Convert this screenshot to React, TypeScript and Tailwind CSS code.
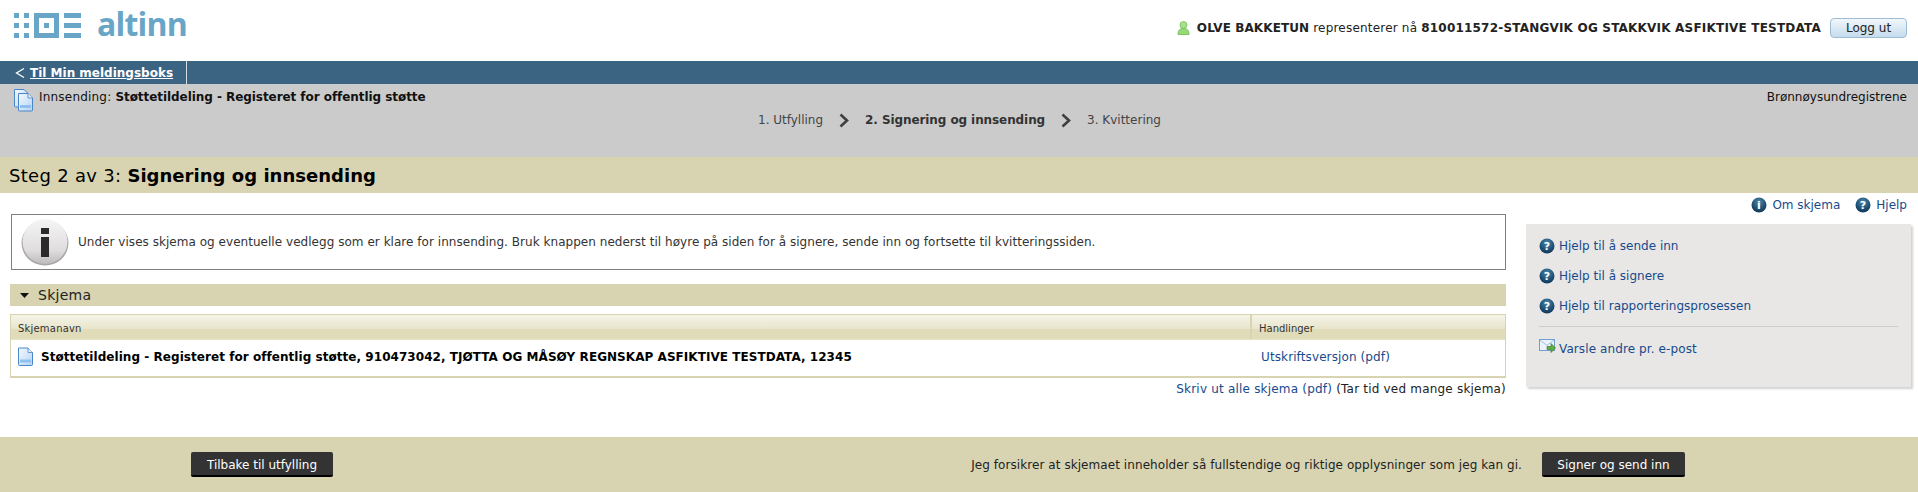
import React from "react";

const LOGO = "#69a5c6";

function AltinnMark() {
  return (
    <svg width="68" height="26" viewBox="0 0 68 26" className="block">
      <g fill={LOGO}>
        <rect x="0" y="0" width="5" height="5" />
        <rect x="10" y="0" width="5" height="5" />
        <rect x="0" y="10" width="5" height="5" />
        <rect x="10" y="10" width="5" height="5" />
        <rect x="0" y="20" width="5" height="5" />
        <rect x="10" y="20" width="5" height="5" />
        <path d="M20 0h25v25H20zM25 5v15h15V5z" fillRule="evenodd" />
        <rect x="30" y="10" width="5" height="5" />
        <rect x="50" y="0" width="17" height="5" />
        <rect x="50" y="10" width="17" height="5" />
        <rect x="50" y="20" width="17" height="5" />
      </g>
    </svg>
  );
}

function DocIcon({ id, stacked }: { id: string; stacked?: boolean }) {
  const sheet = "M1.5 1h9.5l4.5 4.5V17.5a1 1 0 0 1-1 1H2.5a1 1 0 0 1-1-1z";
  return (
    <svg width={stacked ? 22 : 17} height={stacked ? 25 : 20} viewBox={stacked ? "-5 -4.5 22 25" : "0 0 17 20"} className="block">
      <defs>
        <linearGradient id={id} x1="0" y1="0" x2="1" y2="1">
          <stop offset="0" stopColor="#f4f9fe" />
          <stop offset="1" stopColor="#b5d4f4" />
        </linearGradient>
      </defs>
      {stacked && <path d={sheet} transform="translate(-4 -4)" fill={`url(#${id})`} stroke="#4a86c8" strokeWidth="1" />}
      <path d={sheet} fill={`url(#${id})`} stroke="#4a86c8" strokeWidth="1" />
      <path d="M11 1v4.5h4.5" fill="#e4effb" stroke="#4a86c8" strokeWidth="0.8" />
      <rect x="3" y="12.5" width="11" height="3" fill="#8fc0ee" />
    </svg>
  );
}

function HelpDot({ id, glyph }: { id: string; glyph: "?" | "i" }) {
  return (
    <svg width="16" height="16" viewBox="0 0 16 16" className="block shrink-0">
      <defs>
        <radialGradient id={id} cx="0.5" cy="0.3" r="0.75">
          <stop offset="0" stopColor="#4d86ab" />
          <stop offset="0.65" stopColor="#1c4d72" />
          <stop offset="1" stopColor="#0d3454" />
        </radialGradient>
      </defs>
      <circle cx="8" cy="8" r="7.5" fill={`url(#${id})`} />
      <text
        x="8"
        y="12"
        textAnchor="middle"
        fill="#ffffff"
        fontSize="11"
        fontWeight="700"
        fontFamily="'DejaVu Sans', sans-serif"
      >
        {glyph}
      </text>
    </svg>
  );
}

function BigInfo() {
  return (
    <svg width="48" height="48" viewBox="0 0 48 48" className="block shrink-0">
      <defs>
        <linearGradient id="bigInfo" x1="0" y1="0" x2="0" y2="1">
          <stop offset="0" stopColor="#f6f5f5" />
          <stop offset="0.7" stopColor="#dfdddd" />
          <stop offset="1" stopColor="#bdbbbb" />
        </linearGradient>
      </defs>
      <ellipse cx="24" cy="25" rx="23.5" ry="22.5" fill="#a9a7a6" />
      <circle cx="24" cy="23.5" r="22.5" fill="url(#bigInfo)" />
      <rect x="20" y="10" width="8" height="6" fill="#2b2b2b" />
      <rect x="20" y="19" width="8" height="20" fill="#2b2b2b" />
    </svg>
  );
}

function Chevron() {
  return (
    <svg width="10" height="15" viewBox="0 0 10 15" className="block">
      <path d="M1.5 1.5L8 7.5L1.5 13.5" fill="none" stroke="#3f3f3f" strokeWidth="2.6" />
    </svg>
  );
}

function PersonIcon() {
  return (
    <svg width="13" height="14" viewBox="0 0 13 14" className="block">
      <circle cx="6.5" cy="4" r="3.5" fill="#a5e08a" stroke="#76c05a" strokeWidth="0.8" />
      <path d="M1 13.5c0-4 1.5-6 5.500-6s5.500 2 5.500 6z" fill="#96d97a" stroke="#6cba50" strokeWidth="0.8" />
    </svg>
  );
}

function MailIcon() {
  return (
    <svg width="17" height="16" viewBox="0 0 17 16" className="block shrink-0">
      <rect x="0.500" y="0.500" width="15" height="11" fill="#eaf3fc" stroke="#6f9fd0" />
      <path d="M1 1l7 5.500L15 1" fill="none" stroke="#9dbfe2" />
      <path d="M8 7.500h4V4.500l4.500 4.500-4.500 4.500v-3H8z" fill="#62ab45" stroke="#3f7f2c" strokeWidth="0.7" />
    </svg>
  );
}

function Tlink({ children }: { children: React.ReactNode }) {
  return <span className="text-[#174a8c]">{children}</span>;
}

function SideLink({ id, label }: { id: string; label: string }) {
  return (
    <div className="flex h-[30px] items-center gap-[4px]">
      <HelpDot id={id} glyph="?" />
      <Tlink>{label}</Tlink>
    </div>
  );
}

function DarkButton({ label, width }: { label: string; width: string }) {
  return (
    <button className={`h-[25px] ${width} rounded-[2px] border-b-2 border-black bg-[#333333] pt-[2px] text-[12px] text-white`}>
      {label}
    </button>
  );
}

export default function App() {
  return (
    <div className="h-[492px] w-[1918px] overflow-hidden bg-white font-['DejaVu_Sans',Verdana,sans-serif] text-[12px] text-black">
      <header className="flex h-[61px] items-start justify-between pl-[14px] pr-[11px]">
        <div className="flex items-center gap-[15px] pt-[11px]">
          <AltinnMark />
          <span className="-mt-[4px] font-['Open_Sans',sans-serif] text-[32px] font-bold leading-[34px] tracking-[-0.8px] text-[#69a5c6]">
            altinn
          </span>
        </div>
        <div className="flex items-center pt-[18px]">
          <PersonIcon />
          <span className="ml-[7px] tracking-[0.2px] text-[#222]">
            <b className="tracking-[0.1px]">OLVE BAKKETUN</b> representerer nå <b>810011572-STANGVIK OG STAKKVIK ASFIKTIVE TESTDATA</b>
          </span>
          <button className="ml-[9px] h-[20px] w-[77px] rounded-[4px] border border-[#9dbdd6] bg-gradient-to-b from-[#f2f7fb] to-[#c5dcee] text-[12px] text-[#222]">
            Logg ut
          </button>
        </div>
      </header>

      <nav className="flex h-[23px] bg-[#3b6482]">
        <div className="flex w-[187px] items-center border-r border-[#d5dde3] pl-[15px] text-[12px] font-bold text-white">
          <svg width="10" height="12" viewBox="0 0 10 12" className="mr-[5px] block">
            <path d="M9 1.500L1.500 6L9 10.500" fill="none" stroke="#ffffff" strokeWidth="1.300" />
          </svg>
          <span className="underline">Til Min meldingsboks</span>
        </div>
      </nav>

      <section className="h-[73px] bg-[#cbcbcb] pl-[12px] pr-[11px] pt-[4px]">
        <div className="flex items-start justify-between">
          <div className="flex items-start">
            <DocIcon id="docStack" stacked />
            <span className="ml-[5px] tracking-[0.2px] text-[#111]">
              Innsending: <b className="tracking-[-0.06px]">Støttetildeling - Registeret for offentlig støtte</b>
            </span>
          </div>
          <span className="text-[#111]">Brønnøysundregistrene</span>
        </div>
        <div className="-mt-[2px] ml-[746px] flex items-center text-[#444]">
          <span>1. Utfylling</span>
          <span className="mx-[16px]">
            <Chevron />
          </span>
          <b className="tracking-[-0.09px] text-[#333]">2. Signering og innsending</b>
          <span className="mx-[16px]">
            <Chevron />
          </span>
          <span>3. Kvittering</span>
        </div>
      </section>

      <div className="flex h-[36px] items-center bg-[#d8d4b2] pl-[9px] text-[18px] tracking-[0.3px]">
        <span>
          Steg 2 av 3: <b className="tracking-[0.03px]">Signering og innsending</b>
        </span>
      </div>

      <main className="relative flex h-[244px] pl-[10px]">
        <div className="w-[1496px] pt-[21px]">
          <div className="ml-[1px] flex h-[56px] w-[1495px] items-center border border-[#808080] pl-[9px] tracking-[0.035px] text-[#333]">
            <BigInfo />
            <span className="ml-[9px]">
              Under vises skjema og eventuelle vedlegg som er klare for innsending. Bruk knappen nederst til høyre på siden for å signere, sende inn og fortsette til kvitteringssiden.
            </span>
          </div>

          <div className="mt-[14px] flex h-[22px] items-center bg-[#d8d4b2] pl-[10px] text-[14px] tracking-[0.25px] text-[#222]">
            <svg width="9" height="5" viewBox="0 0 9 5" className="mr-[9px] block">
              <path d="M0 0h9L4.500 5z" fill="#111111" />
            </svg>
            Skjema
          </div>

          <div className="mt-[8px] border border-[#d8d4b2] border-b-2">
            <div className="flex h-[25px] border-b border-[#e6e3c6] bg-[linear-gradient(to_bottom,#f5f4e8_0%,#e8e5cb_58%,#e0dcb9_58%,#e0dcb9_100%)] text-[10px] text-[#333]">
              <div className="flex w-[1241px] items-center border-r-2 border-[#d8d4b2] pl-[7px] pt-[3px] tracking-[0.2px]">Skjemanavn</div>
              <div className="flex items-center pl-[7px] pt-[3px]">Handlinger</div>
            </div>
            <div className="flex h-[36px] items-center pb-[2px]">
              <div className="flex w-[1243px] items-center pl-[6px]">
                <DocIcon id="docRow" />
                <b className="ml-[7px] text-[12px] tracking-[0.05px]">
                  Støttetildeling - Registeret for offentlig støtte, 910473042, TJØTTA OG MÅSØY REGNSKAP ASFIKTIVE TESTDATA, 12345
                </b>
              </div>
              <div className="pl-[7px] tracking-[0.11px]">
                <Tlink>Utskriftsversjon (pdf)</Tlink>
              </div>
            </div>
          </div>

          <div className="mt-[2px] text-right tracking-[0.2px] text-[#222]">
            <Tlink>Skriv ut alle skjema (pdf)</Tlink> (Tar tid ved mange skjema)
          </div>
        </div>

        <aside className="ml-[20px] w-[385px] pt-[31px]">
          <div className="h-[163px] bg-[#e8e7e5] px-[13px] pt-[7px] shadow-[2px_2px_2px_rgba(0,0,0,0.18)]">
            <SideLink id="help1" label="Hjelp til å sende inn" />
            <SideLink id="help2" label="Hjelp til å signere" />
            <SideLink id="help3" label="Hjelp til rapporteringsprosessen" />
            <div className="mt-[5px] border-t border-[#cccccc]" />
            <div className="mt-[12px] flex items-start gap-[3px]">
              <MailIcon />
              <span className="pt-[1px] tracking-[0.1px]">
                <Tlink>Varsle andre pr. e-post</Tlink>
              </span>
            </div>
          </div>
        </aside>

        <div className="absolute right-[11px] top-[3px] flex items-center">
          <HelpDot id="topInfo" glyph="i" />
          <span className="ml-[5px]">
            <Tlink>Om skjema</Tlink>
          </span>
          <span className="ml-[15px]">
            <HelpDot id="topHelp" glyph="?" />
          </span>
          <span className="ml-[5px]">
            <Tlink>Hjelp</Tlink>
          </span>
        </div>
      </main>

      <footer className="flex h-[55px] items-center bg-[#d8d4b2] pl-[191px] pr-[233px]">
        <DarkButton label="Tilbake til utfylling" width="w-[142px]" />
        <span className="ml-auto mr-[20px] tracking-[0.07px] text-[#222]">
          Jeg forsikrer at skjemaet inneholder så fullstendige og riktige opplysninger som jeg kan gi.
        </span>
        <DarkButton label="Signer og send inn" width="w-[143px]" />
      </footer>
    </div>
  );
}
